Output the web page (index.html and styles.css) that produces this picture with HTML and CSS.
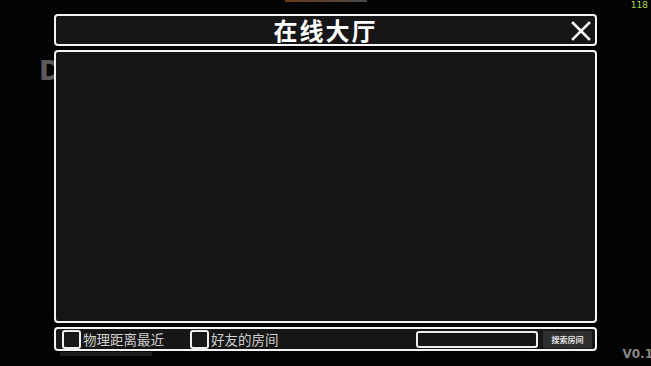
FILE: index.html
```html
<!DOCTYPE html>
<html>
<head>
    <meta charset="UTF-8">
    <title>在线大厅</title>
    <link rel="stylesheet" href="styles.css">
</head>
<body>

<div class="backdrop-tab"></div>
<div class="backdrop-letter">D</div>
<div class="backdrop-bar"></div>
<div class="fps">118</div>
<div class="version">V0.1</div>

<div class="lobby">
    <div class="panel header">
        <h1>在线大厅</h1>
        <button class="close" aria-label="close">
            <svg width="20" height="20" viewBox="0 0 20 20">
                <path d="M2 2 L18 18 M18 2 L2 18" stroke="#fff" stroke-width="2.6" stroke-linecap="square"/>
            </svg>
        </button>
    </div>

    <div class="panel rooms"></div>

    <div class="panel filters">
        <label class="check"><span class="box"></span>物理距离最近</label>
        <label class="check"><span class="box"></span>好友的房间</label>
        <div class="spacer"></div>
        <input class="search" type="text">
        <button class="search-btn">搜索房间</button>
    </div>
</div>

</body>
</html>
```

FILE: styles.css
```css
body {
    margin: 0;
    width: 651px;
    height: 366px;
    overflow: hidden;
    background-color: #030303;
    font-family: "Noto Sans CJK SC", "Noto Sans", sans-serif;
    color: #fff;
    position: relative;
}

.lobby {
    display: flex;
    flex-direction: column;
    gap: 4px;
    width: 543px;
    margin-left: 54px;
    padding-top: 14px;
    position: relative;
}

.panel {
    box-sizing: border-box;
    border: 2px solid #f4f4f4;
    border-radius: 4px;
    background-color: #161616;
}

.header {
    height: 32px;
    display: flex;
    align-items: center;
    justify-content: center;
    position: relative;
}

.header h1 {
    margin: 0;
    font-size: 24px;
    font-weight: 700;
    letter-spacing: 2px;
    line-height: 28px;
}

.close {
    position: absolute;
    right: 4px;
    top: 5px;
    width: 20px;
    height: 20px;
    padding: 0;
    border: none;
    background: none;
    cursor: pointer;
}

.rooms {
    height: 273px;
}

.filters {
    height: 24px;
    display: flex;
    align-items: center;
    padding: 0 3px 0 6px;
}

.check {
    display: flex;
    align-items: center;
    font-size: 13.5px;
    color: #d0d0d0;
    margin-right: 26px;
}

.box {
    width: 15px;
    height: 15px;
    border: 2px solid #eee;
    border-radius: 3px;
    margin-right: 2px;
    background-color: #181818;
}

.spacer {
    flex: 1;
}

.search {
    box-sizing: border-box;
    width: 122px;
    height: 17px;
    border: 2px solid #eee;
    border-radius: 3px;
    background-color: #141414;
    margin-right: 5px;
}

.search-btn {
    height: 17px;
    width: 49px;
    padding: 0;
    border: none;
    border-radius: 1px;
    background-color: #2f2f2f;
    color: #e0e0e0;
    font-family: "Noto Sans CJK SC", sans-serif;
    font-size: 8px;
    font-weight: 700;
}

/* things behind / above the lobby */
.fps {
    position: absolute;
    right: 3px;
    top: 0;
    font-family: "DejaVu Sans", sans-serif;
    font-size: 9px;
    color: #a8d84a;
}

.version {
    position: absolute;
    right: -2px;
    bottom: 5px;
    font-family: "DejaVu Sans", sans-serif;
    font-weight: 700;
    font-size: 12px;
    color: #8a8a8a;
}

.backdrop-letter {
    position: absolute;
    left: 39px;
    top: 55px;
    font-family: "DejaVu Sans", sans-serif;
    font-weight: 700;
    font-size: 27px;
    color: #5a5a5a;
}

.backdrop-tab {
    position: absolute;
    left: 285px;
    top: 0;
    width: 82px;
    height: 2px;
    background: linear-gradient(to right, #6a3a1a, #4a4a4a);
}

.backdrop-bar {
    position: absolute;
    left: 60px;
    top: 352px;
    width: 92px;
    height: 4px;
    background-color: #1c1c1c;
}
```
